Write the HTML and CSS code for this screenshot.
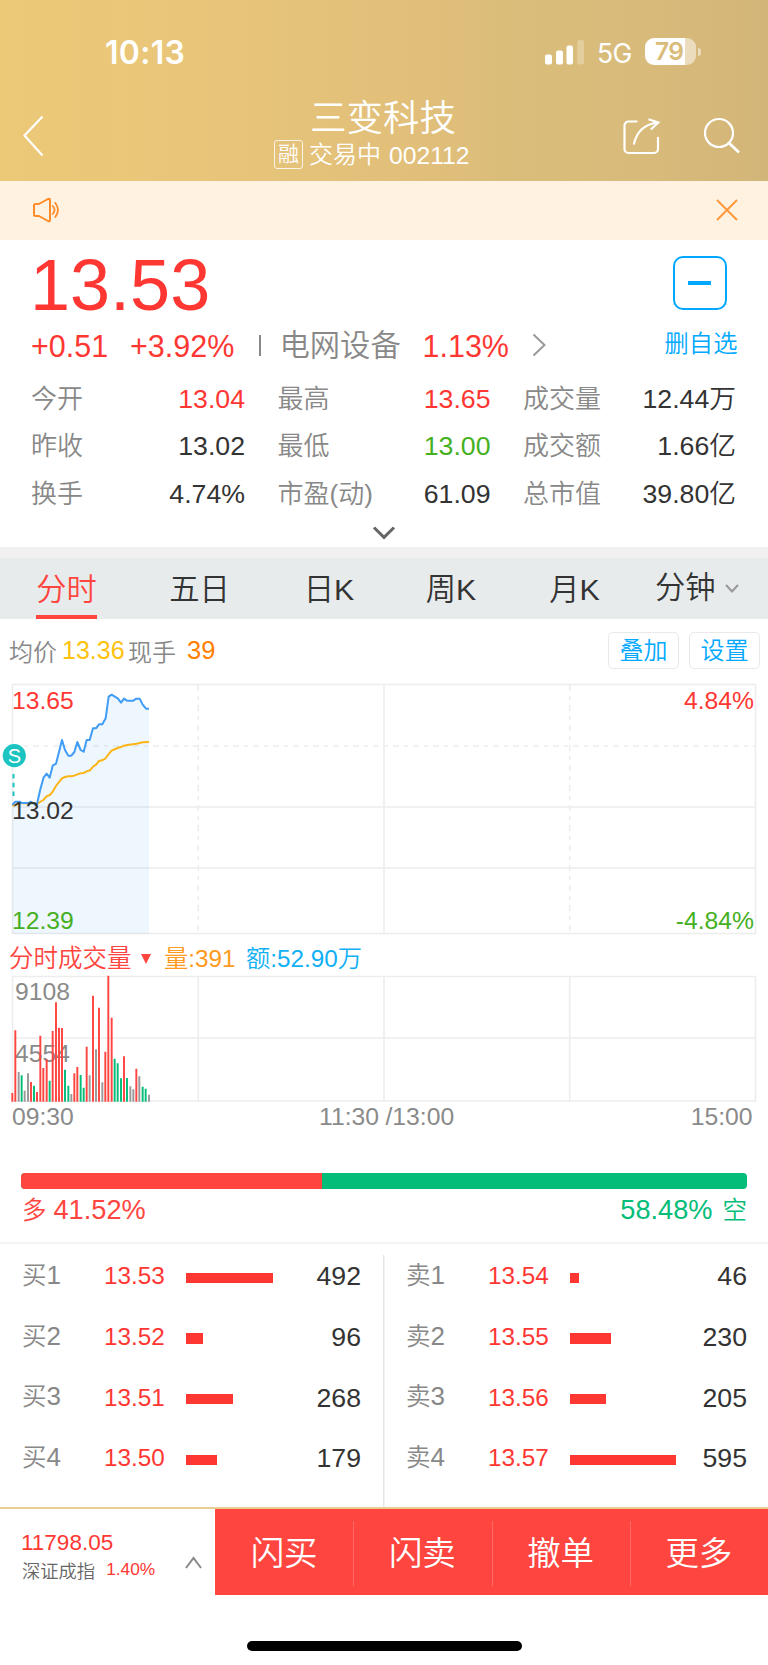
FILE: index.html
```html
<!DOCTYPE html>
<html lang="zh-CN">
<head>
<meta charset="utf-8">
<title>三变科技 002112</title>
<link rel="stylesheet" href="styles.css">
</head>
<body>
<header class="header">
  <div class="status">
    <span class="clock">10:13</span>
    <svg class="signal" width="40" height="26" viewBox="0 0 40 26" fill="#fff">
      <rect x="0" y="15.5" width="7" height="10" rx="2"/>
      <rect x="11" y="11.5" width="7" height="14" rx="2"/>
      <rect x="21.5" y="6.5" width="6.5" height="19" rx="2"/>
      <rect x="32.3" y="1" width="6.7" height="24.5" rx="2" opacity=".27"/>
    </svg>
    <span class="net">5G</span>
    <span class="battery">79</span>
    <i class="battery-tip"></i>
  </div>
  <div class="nav">
    <svg class="back" width="22" height="42" viewBox="0 0 22 42" fill="none" stroke="#fff" stroke-width="2.200"><path d="M19.5 1.5 1.5 20.5 19.5 40.5"/></svg>
    <div class="heading">
      <h1 class="name">三变科技</h1>
      <div class="sub"><span class="tag">融</span><span>交易中</span><span class="code">002112</span></div>
    </div>
    <svg class="share" width="40" height="40" viewBox="0 0 40 40" fill="none" stroke="#fff" stroke-width="2.200"><path d="M15.500 4.500H6.500a4 4 0 0 0-4 4V32a4 4 0 0 0 4 4H32a4 4 0 0 0 4-4V20"/><path d="M11.800 27.500C14 17 21 7.500 35.500 5.500M26.500 2.200l9.800 3.300-7.500 7"/></svg>
    <svg class="search" width="38" height="38" viewBox="0 0 38 38" fill="none" stroke="#fff" stroke-width="2.200"><circle cx="16" cy="16" r="14"/><path d="M26 26 36 35.500" stroke-width="2.800"/></svg>
  </div>
</header>

<div class="notice">
  <svg width="28" height="26" viewBox="0 0 28 26" fill="none" stroke="#ff8a26" stroke-width="2" stroke-linejoin="round" stroke-linecap="round"><path d="M2 8.500Q2 7 3.500 7H7L16 2q2-.8 2 1v20q0 1.800-2 1L7 19H3.500Q2 19 2 17.500Z"/><path d="M20.800 9q3.400 4 0 8M23.300 6q5.400 7 0 14" stroke-width="1.800"/></svg>
  <svg width="22" height="22" viewBox="0 0 22 22" fill="none" stroke="#ff9638" stroke-width="1.800"><path d="M1 1 21 21M21 1 1 21"/></svg>
</div>

<section class="quote">
  <div class="quote-top">
    <div class="quote-main">
      <div class="price red">13.53</div>
      <div class="change">
        <span class="red diff">+0.51</span><span class="red pct">+3.92%</span><i class="bar"></i>
        <span class="sector">电网设备</span><span class="red sector-pct">1.13%</span>
        <svg width="14" height="24" viewBox="0 0 14 24" fill="none" stroke="#999" stroke-width="2"><path d="M1.500 1.500 12.500 12 1.500 22.500"/></svg>
      </div>
    </div>
    <div class="fav"><span class="fav-box"><i></i></span><span class="fav-text">删自选</span></div>
  </div>
  <dl class="stats">
    <div><dt>今开</dt><dd class="red">13.04</dd></div><div><dt>最高</dt><dd class="red">13.65</dd></div><div><dt>成交量</dt><dd>12.44万</dd></div>
    <div><dt>昨收</dt><dd>13.02</dd></div><div><dt>最低</dt><dd class="down">13.00</dd></div><div><dt>成交额</dt><dd>1.66亿</dd></div>
    <div><dt>换手</dt><dd>4.74%</dd></div><div><dt>市盈(动)</dt><dd>61.09</dd></div><div><dt>总市值</dt><dd>39.80亿</dd></div>
  </dl>
  <svg class="expand" width="24" height="14" viewBox="0 0 24 14" fill="none" stroke="#666" stroke-width="3"><path d="M2 1.500 12 11.300 22 1.500"/></svg>
</section>

<nav class="tabs">
  <span class="active">分时</span><span>五日</span><span>日K</span><span>周K</span><span>月K</span>
  <span class="more">分钟<svg width="14" height="9" viewBox="0 0 14 9" fill="none" stroke="#999" stroke-width="2"><path d="M1 1 7 7.500 13 1"/></svg></span>
</nav>

<div class="info">
  <span class="lbl">均价</span><span class="avg">13.36</span><span class="lbl">现手</span><span class="lots">39</span>
  <button class="btn">叠加</button><button class="btn">设置</button>
</div>

<svg class="chart" width="768" height="260" viewBox="0 0 768 260">
  <g fill="none" stroke="#ededed" stroke-width="1.600">
    <rect x="12.500" y="5.500" width="743" height="249"/>
    <path d="M12.500 128H755.500M12.500 189H755.500M384 5.500V254.500"/>
    <path d="M13 67H755" stroke-dasharray="6 5 4 5"/>
    <path d="M198.300 6V254M569.700 6V254" stroke-dasharray="6 5 4 5"/>
  </g>
  <g transform="translate(0 -9) scale(.33333)">
    <path fill="#409cf5" fill-opacity=".09" d="M37 405 46 395H60L64 399H86L92 395 99 399 106 405 111 402 121 358 131 322 140 311 149 323 158 287 168 281 186 210 195 240 205 257H214L223 246 232 216 242 240 251 245 260 210H269L279 175H288L297 163H307L317 145 326 80 335 74 354 86 363 98 372 86 381 92H400L409 86H419L428 104 438 116H447V791H37Z"/>
    <path fill="none" stroke="#fdb515" stroke-width="6" d="M37 407 46 405 60 400H95L112 401 120 396 130 390 140 379 150 375 158 365 168 348 177 336 186 325 195 321 205 319H214L223 317 232 313 242 310 251 309 260 304 270 301 279 290 288 284 297 273 307 271 317 265 326 252 335 242 353 234 363 231 372 227 382 225 410 221 428 217 447 216"/>
    <path fill="none" stroke="#409cf5" stroke-width="6" stroke-linejoin="round" d="M37 405 46 395H60L64 399H86L92 395 99 399 106 405 111 402 121 358 131 322 140 311 149 323 158 287 168 281 186 210 195 240 205 257H214L223 246 232 216 242 240 251 245 260 210H269L279 175H288L297 163H307L317 145 326 80 335 74 354 86 363 98 372 86 381 92H400L409 86H419L428 104 438 116H447"/>
  </g>
  <path d="M13.500 95V117" stroke="#1bc4c0" stroke-width="2" stroke-dasharray="4.500 4.200"/>
  <circle cx="14.300" cy="76.600" r="11.600" fill="#1bc4c0"/>
  <text x="14.300" y="84" class="s-mark">S</text>
  <g class="axis">
    <text x="12" y="29.500" fill="#ff3733">13.65</text>
    <text x="12" y="139.500" fill="#333">13.02</text>
    <text x="12" y="249.500" fill="#46b01f">12.39</text>
    <text x="754" y="29.500" class="end" fill="#ff3733">4.84%</text>
    <text x="754" y="249.500" class="end" fill="#46b01f">-4.84%</text>
  </g>
</svg>

<div class="vol-title">
  <span class="vt-name">分时成交量</span>
  <svg width="10" height="10" viewBox="0 0 10 10"><path d="M0 0H10L5 10Z" fill="#ff4540"/></svg>
  <span class="vt-vol">量:391</span><span class="vt-amt">额:52.90万</span>
</div>

<svg class="vol" width="768" height="160" viewBox="0 0 768 160">
  <g fill="none" stroke="#ededed" stroke-width="1.600">
    <path d="M12.500 1.500H755.500V126H12.500ZM12.500 63H755.500M198.300 1.500V126M384 1.500V126M569.700 1.500V126"/>
  </g>
  <g class="axis" fill="#8a8a8a">
    <text x="15" y="25">9108</text>
    <text x="15" y="86.500">4554</text>
    <text x="12" y="150">09:30</text>
    <text x="319" y="150">11:30</text>
    <text x="385.500" y="150">/13:00</text>
    <text x="752.500" y="150" class="end">15:00</text>
  </g>
  <g transform="translate(0 -35) scale(.33333)" fill="none" stroke-width="5.800">
    <path stroke="#ff4540" d="M37 485V459M46 485V271M93 485V426M111 485V456M121 485V287M130 485V384M140 485V358M158 485V273M168 485V187M177 485V263M186 485V264M223 485V400M232 485V381M260 485V320M279 485V167M297 485V203M316 485V335M325 485V107M335 485V233M372 485V349M409 485V386"/>
    <path stroke="#03bd79" d="M65 485V406M102 485V437M149 485V422M195 485V389M205 485V437M242 485V405M251 485V443M344 485V356M353 485V370M363 485V415M381 485V414M428 485V440M437 485V446"/>
    <path stroke="#999" d="M56 485V396M74 485V452M84 485V400M214 485V462M269 485V406M288 485V328M307 485V427M391 485V439M400 485V448M418 485V409M447 485V464"/>
  </g>
</svg>

<section class="ratio">
  <div class="ratio-bar"><i style="width:41.52%"></i></div>
  <div class="ratio-text"><span>多<b>41.52%</b></span><span class="short"><b>58.48%</b>空</span></div>
</section>

<section class="book">
  <div class="side">
    <div class="row"><span class="lv">买<b>1</b></span><span class="p">13.53</span><i style="width:87px"></i><span class="q">492</span></div>
    <div class="row"><span class="lv">买<b>2</b></span><span class="p">13.52</span><i style="width:17px"></i><span class="q">96</span></div>
    <div class="row"><span class="lv">买<b>3</b></span><span class="p">13.51</span><i style="width:47px"></i><span class="q">268</span></div>
    <div class="row"><span class="lv">买<b>4</b></span><span class="p">13.50</span><i style="width:31px"></i><span class="q">179</span></div>
  </div>
  <div class="side sell">
    <div class="row"><span class="lv">卖<b>1</b></span><span class="p">13.54</span><i style="width:9px"></i><span class="q">46</span></div>
    <div class="row"><span class="lv">卖<b>2</b></span><span class="p">13.55</span><i style="width:41px"></i><span class="q">230</span></div>
    <div class="row"><span class="lv">卖<b>3</b></span><span class="p">13.56</span><i style="width:36px"></i><span class="q">205</span></div>
    <div class="row"><span class="lv">卖<b>4</b></span><span class="p">13.57</span><i style="width:106px"></i><span class="q">595</span></div>
  </div>
</section>

<footer class="bottom">
  <div class="index">
    <div class="index-val">11798.05</div>
    <div class="index-name"><span>深证成指</span><span class="index-pct">1.40%</span></div>
  </div>
  <svg class="up" width="17" height="13" viewBox="0 0 17 13" fill="none" stroke="#888" stroke-width="2"><path d="M1 12 8.500 2 16 12"/></svg>
  <div class="actions"><span>闪买</span><span>闪卖</span><span>撤单</span><span>更多</span></div>
</footer>
<div class="home"><i></i></div>
</body>
</html>
```
FILE: styles.css
```css
* { box-sizing: border-box; }
body {
  margin: 0;
  width: 768px;
  height: 1665px;
  overflow: hidden;
  background: #fff;
  color: #333;
  font-family: "Liberation Sans", "Noto Sans CJK SC", sans-serif;
  font-weight: 350;
  display: flex;
  flex-direction: column;
}
body > * { flex: none; }
svg { display: block; flex: none; }
b { font-weight: 350; }
.red { color: #ff3733; }

.header {
  height: 181px;
  color: #fff;
  background: linear-gradient(90deg, #ecc977, #e9c679 20%, #e1bf7a 55%, #dbbd7a 65%, #d8bb7b 85%, #d2b578);
}
.status { height: 100px; display: flex; align-items: flex-start; padding: 32px 0 0 105px; font-family: Inter, sans-serif; }
.clock { width: 440px; font-size: 32px; font-weight: 600; line-height: 42px; letter-spacing: .3px; }
.signal { margin-top: 6.500px; }
.net { margin-left: 12px; width: 48px; font-size: 26.500px; font-weight: 400; line-height: 43px; letter-spacing: -.5px; }
.battery {
  margin-top: 6px; width: 51px; height: 27px; border-radius: 9px;
  background: linear-gradient(90deg, #fff 40px, rgba(255,255,255,.5) 40px);
  color: #d9bb7a; font-size: 24.500px; font-weight: 600; line-height: 27px; padding-left: 10px; letter-spacing: -.7px;
}
.battery-tip { margin: 16px 0 0 2px; width: 3px; height: 8px; border-radius: 0 4px 4px 0; background: rgba(255,255,255,.5); }
.nav { display: flex; height: 81px; align-items: flex-start; padding-left: 23px; }
.back { margin-top: 15px; }
.heading { width: 250px; margin-left: 202px; }
.name { margin: -2px 0 0 63px; font-size: 36.500px; font-weight: 350; line-height: 42px; height: 42px; }
.sub { display: flex; align-items: center; margin: 0 0 0 27px; height: 30px; font-size: 24px; line-height: 30px; }
.tag { width: 29px; height: 29px; border: 1.500px solid rgba(255,255,255,.8); border-radius: 3px; font-size: 21px; line-height: 26px; text-align: center; margin: -1px 6px 0 0; }
.code { margin: 1px 0 0 8px; font-size: 24.700px; }
.share { margin: 16.500px 0 0 125px; }
.search { margin: 17px 0 0 41px; }

.notice { height: 59px; background: #fff2e0; display: flex; justify-content: space-between; align-items: center; padding: 0 30px 1px 32px; }

.quote { height: 307px; }
.quote-top { display: flex; justify-content: space-between; height: 134px; padding: 0 31px 0 29px; }
.price { height: 84px; padding: 9px 0 0 1px; font-size: 72px; line-height: 72px; }
.change { display: flex; align-items: center; height: 44px; font-size: 30.500px; line-height: 44px; padding-left: 2px; }
.diff { width: 99px; }
.pct { width: 129px; }
.bar { width: 1.500px; height: 21px; margin-top: -2px; background: #888; }
.sector { width: 143px; margin-left: 19px; font-size: 30.300px; color: #888; }
.sector-pct { width: 109px; }
.change svg { margin-top: -2px; }
.fav { width: 72px; display: flex; flex-direction: column; align-items: center; padding-top: 16px; color: #00a8ff; }
.fav-box { width: 54px; height: 54px; margin-left: -3px; border: 2px solid #00a8ff; border-radius: 10px; display: grid; place-items: center; }
.fav-box i { width: 23px; height: 4.500px; background: #00a8ff; }
.fav-text { margin-top: 14px; font-size: 24.300px; line-height: 40px; white-space: nowrap; }
.stats { margin: 0; display: grid; grid-template-columns: 214px 213px 213px; grid-auto-rows: 47.700px; column-gap: 32.500px; padding: 1.500px 0 0 31px; line-height: 47px; font-size: 26.700px; }
.stats div { display: flex; justify-content: space-between; white-space: nowrap; }
.stats dt { color: #888; font-size: 26px; }
.stats dd { margin: 0; }
.stats .down { color: #46b01f; }
.expand { margin: 7px auto 0; }

.tabs {
  height: 72px; border-top: 11px solid #f1f1f1; background: #e7ebec;
  display: grid; grid-template-columns: 133px 133px 126px 118px 129px 129px;
  justify-items: center; font-size: 30.300px; line-height: 64px;
}
.tabs .active { color: #ff4540; height: 61px; border-bottom: 4px solid #ff4540; }
.more { display: flex; align-items: center; gap: 9px; justify-self: start; padding-left: 16px; height: 60px; white-space: nowrap; }

.info { display: flex; align-items: center; height: 60px; padding: 2px 8px 0 9px; font-size: 25.500px; }
.lbl { color: #888; font-size: 24px; }
.avg { color: #fec20f; width: 71px; padding-left: 5px; font-size: 25px; }
.lots { color: #ff8000; margin: 0 auto 0 11px; }
.btn { width: 71px; height: 37px; margin-left: 10px; padding: 0; border: 1.500px solid #e9e9e9; border-radius: 5px; background: #fff; color: #00a8ff; font: 350 24px/35px "Liberation Sans", "Noto Sans CJK SC", sans-serif; }
.axis { font-size: 24.700px; }
.end { text-anchor: end; }
.s-mark { fill: #fff; font-size: 20px; text-anchor: middle; }

.vol-title { display: flex; align-items: center; height: 36px; padding: 3px 0 0 9px; font-size: 24.300px; line-height: 36px; white-space: nowrap; }
.vt-name { color: #ff4540; width: 132px; font-size: 24.500px; }
.vt-vol { color: #ff9a20; width: 82px; margin-left: 13px; }
.vt-amt { color: #10b0f5; }
.vol { height: 160px; }

.ratio { height: 109px; padding: 38px 21px 0; border-bottom: 2px solid #f4f4f4; }
.ratio-bar { height: 16px; border-radius: 4px; background: #03bd79; overflow: hidden; }
.ratio-bar i { display: block; height: 16px; background: #ff4540; }
.ratio-text { display: flex; justify-content: space-between; padding: 0 0 0 1px; font-size: 24.500px; line-height: 41px; color: #ff4540; }
.ratio-text b { font-size: 27.200px; margin-left: 7px; }
.ratio-text .short { color: #03bd79; }
.short b { margin-right: 10px; }

.book { height: 263px; display: flex; padding-top: 2px; }
.side { width: 384px; padding: 0 23px 0 22px; }
.sell { background: linear-gradient(#e6e6e6, #e6e6e6) 0 9px / 1.500px 100% no-repeat; margin-left: -1px; width: 385px; padding: 0 21px 0 23px; }
.row { display: flex; align-items: center; height: 60.700px; line-height: 34px; }
.lv { width: 82px; color: #888; font-size: 24.500px; margin-top: -2px; }
.lv b { font-size: 26px; }
.p { width: 82px; color: #ff3733; font-size: 24.300px; }
.row i { height: 10.500px; margin-top: 3px; background: #ff3733; }
.q { margin-left: auto; font-size: 26.700px; }

.bottom { height: 88px; border-top: 2px solid #e8cd90; display: flex; }
.index { width: 185px; padding: 20px 0 0 21px; color: #ff3733; }
.index-val { font-size: 22.500px; line-height: 28px; }
.index-name { display: flex; padding-left: 1px; font-size: 18.300px; line-height: 29px; color: #666; white-space: nowrap; }
.index-pct { margin: -2px 0 0 11px; font-size: 17.300px; color: #ff3733; }
.up { margin: 47px 13px 0 0; }
.actions { flex: 1; background: #ff4540; color: #fff; display: grid; grid-template-columns: repeat(4, 1fr); font-size: 33.500px; line-height: 90px; height: 86px; text-align: center; }
.actions span { height: 86px; }
.actions span + span { background: linear-gradient(rgba(255,255,255,.2), rgba(255,255,255,.2)) 0 12px / 1px 65px no-repeat; }
.home { flex: 1; padding-top: 46px; }
.home i { display: block; width: 275px; height: 9.500px; margin: 0 auto; border-radius: 5px; background: #000; }
```
